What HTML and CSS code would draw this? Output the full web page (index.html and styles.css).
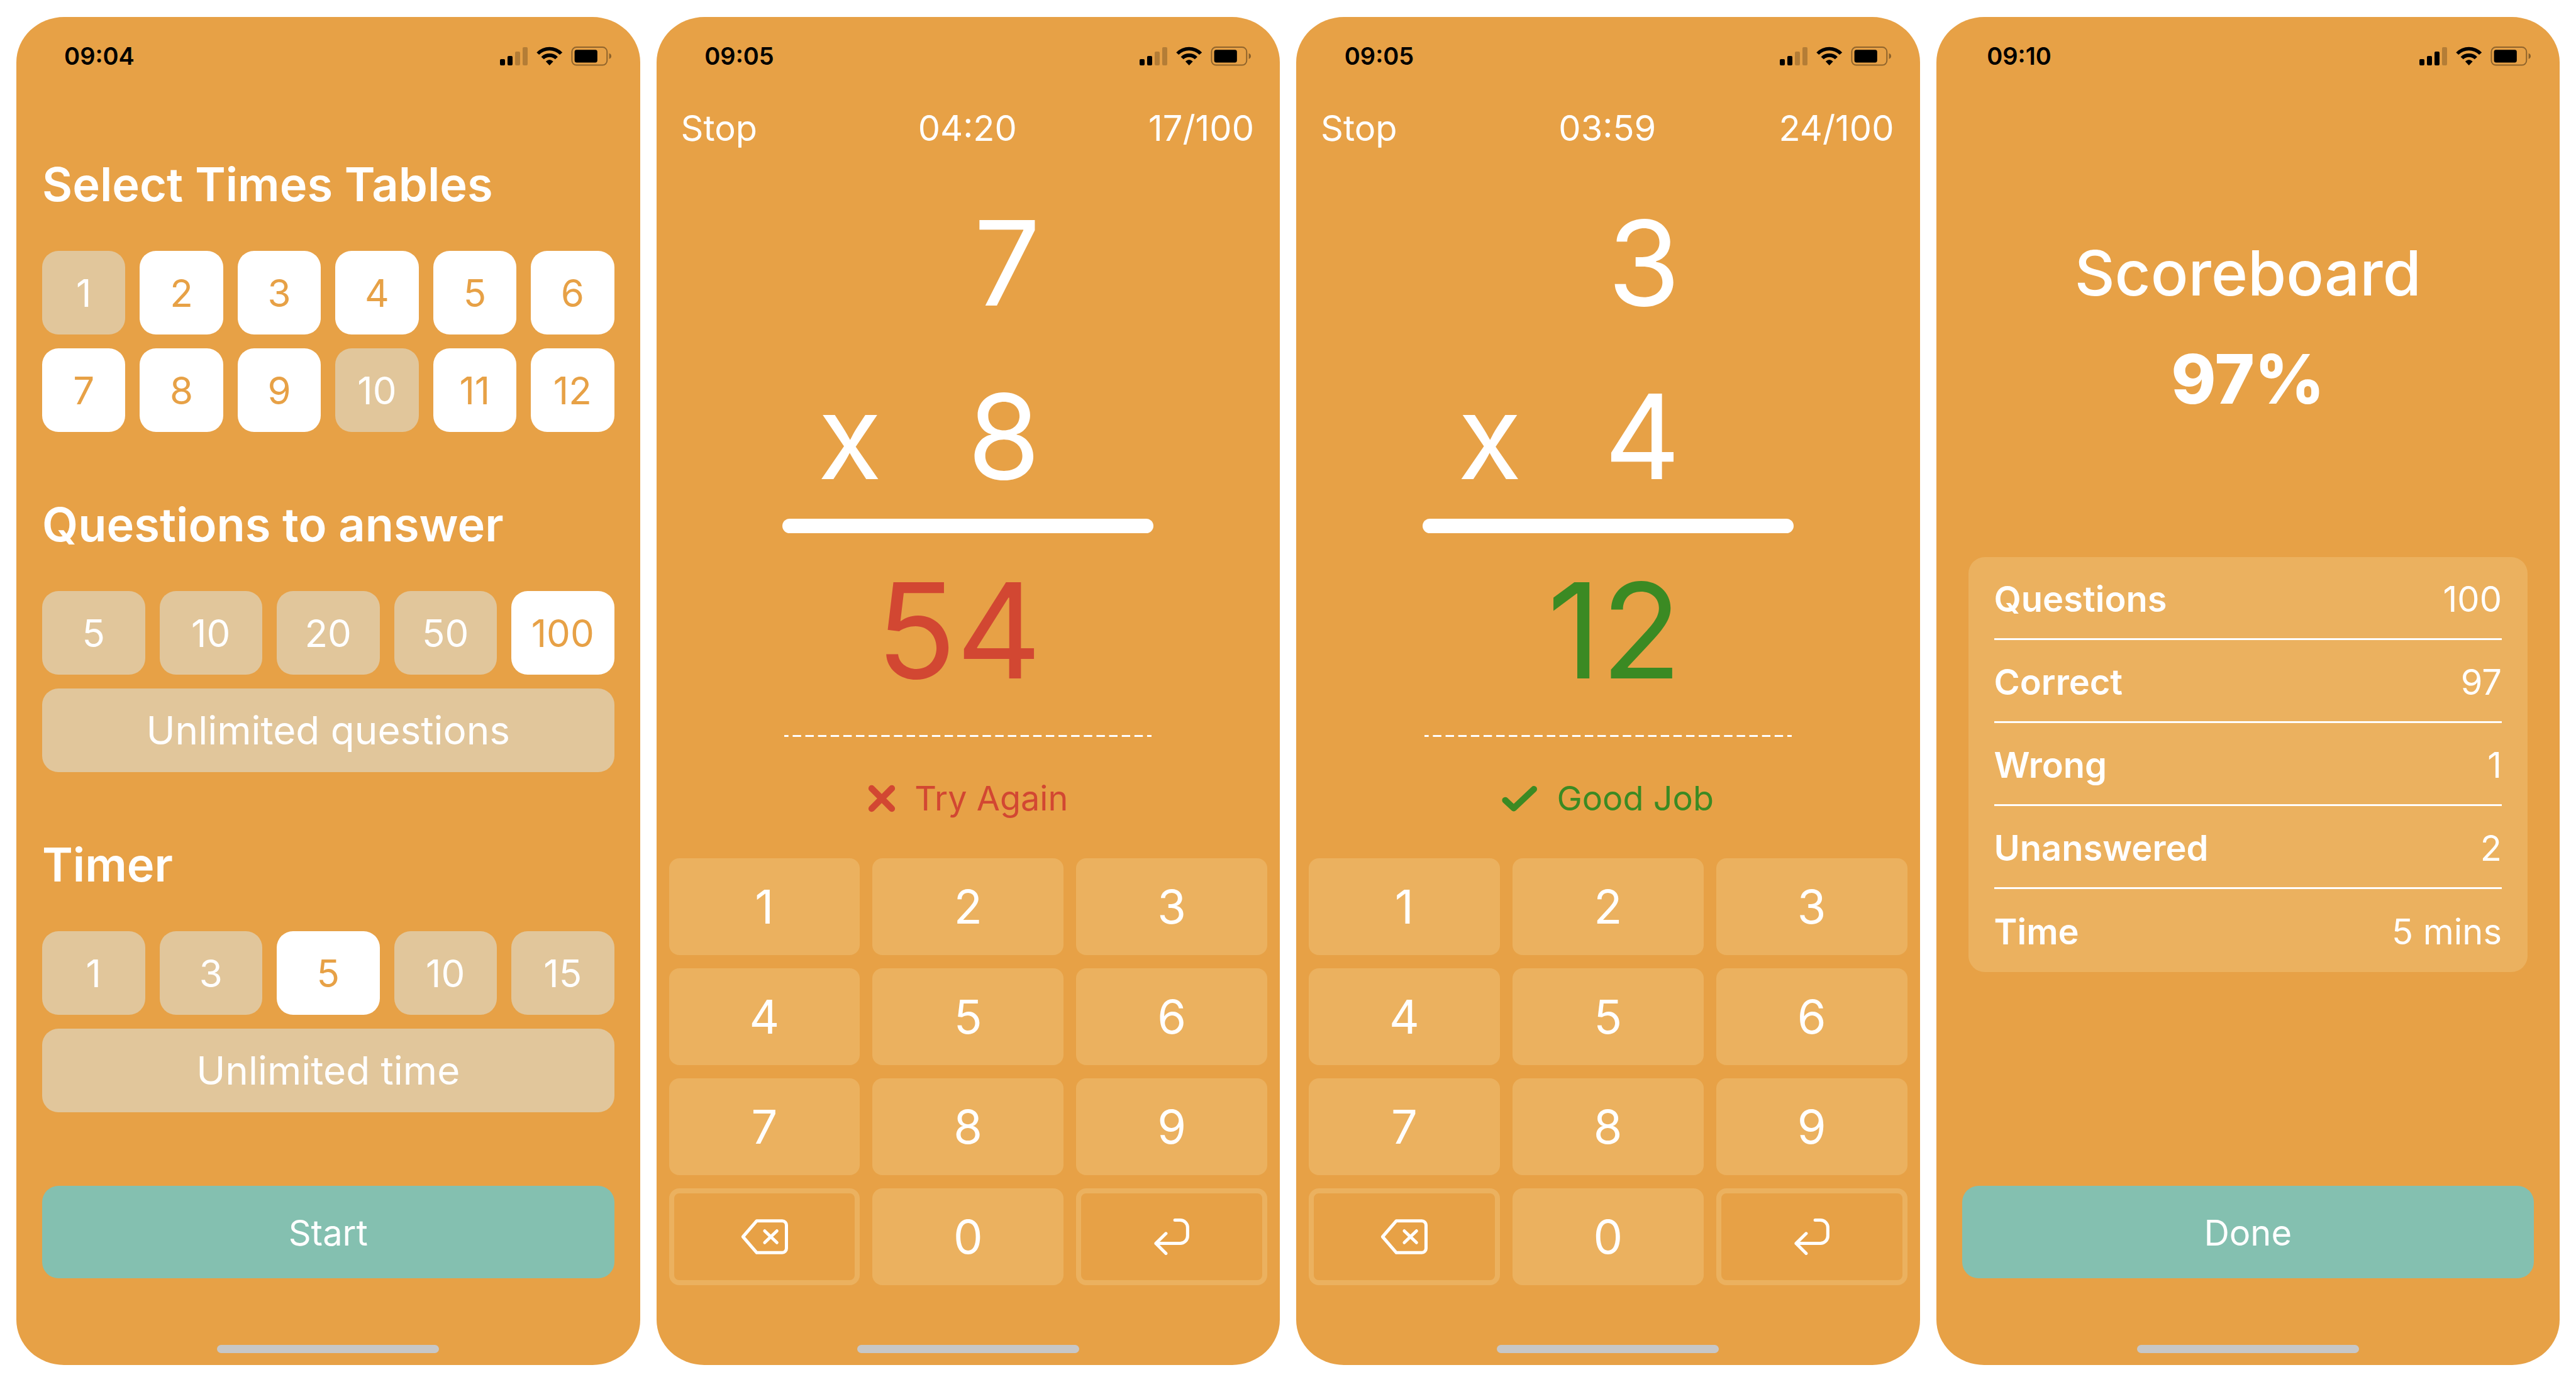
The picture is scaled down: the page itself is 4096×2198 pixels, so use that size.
FILE: index.html
```html
<!DOCTYPE html>
<html lang="en">
<head>
<meta charset="utf-8">
<title>Times Tables</title>
<link rel="stylesheet" href="styles.css">
</head>
<body>
<svg class="defs" aria-hidden="true">
  <symbol id="wifi-battery" viewBox="0 0 430 114">
    <path d="M4 37A102 102 0 0 1 150 37L135 50A82 82 0 0 0 18 50Z" fill="#000"/>
    <path d="M30 62A66 66 0 0 1 124 62L109 76A46 46 0 0 0 45 76Z" fill="#000"/>
    <path d="M56 88Q77 69 98 88L77 110Z" fill="#000"/>
    <rect x="204" y="7" width="199" height="102" rx="26" fill="none" stroke="#000" stroke-opacity=".38" stroke-width="7"/>
    <rect x="219" y="22" width="129" height="72" rx="12" fill="#000"/>
    <path d="M415 42Q427 47 427 58T415 74Z" fill="#000" fill-opacity=".4"/>
  </symbol>
  <symbol id="backspace" viewBox="0 0 89 66">
    <g fill="none" stroke="#fff" stroke-width="6" stroke-linecap="round" stroke-linejoin="round">
      <path d="M4 33L30 3H78a8 8 0 0 1 8 8V55a8 8 0 0 1-8 8H30Z"/>
      <path d="M45 22L68 44M68 22L45 44"/>
    </g>
  </symbol>
  <symbol id="enter" viewBox="107 75 199 207">
    <path d="M225 84H255A42 42 0 0 1 297 126V174A42 42 0 0 1 255 216H117M174 160L117 216L174 273" fill="none" stroke="#fff" stroke-width="18" stroke-linecap="round" stroke-linejoin="round"/>
  </symbol>
</svg>

<main class="screens">
  <section class="screen">
    <header class="status">
      <time class="clock">09:04</time>
      <span class="indicators">
        <span class="signal"><i></i><i></i><i class="off"></i><i class="off"></i></span>
        <svg class="wifi-battery"><use href="#wifi-battery"/></svg>
      </span>
    </header>
    <div class="setup">
      <h2>Select Times Tables</h2>
      <div class="options six">
        <button class="option">1</button><button class="option on">2</button><button class="option on">3</button><button class="option on">4</button><button class="option on">5</button><button class="option on">6</button>
        <button class="option on">7</button><button class="option on">8</button><button class="option on">9</button><button class="option">10</button><button class="option on">11</button><button class="option on">12</button>
      </div>
      <h2>Questions to answer</h2>
      <div class="options five">
        <button class="option">5</button><button class="option">10</button><button class="option">20</button><button class="option">50</button><button class="option on">100</button>
        <button class="option wide">Unlimited questions</button>
      </div>
      <h2>Timer</h2>
      <div class="options five">
        <button class="option">1</button><button class="option">3</button><button class="option on">5</button><button class="option">10</button><button class="option">15</button>
        <button class="option wide">Unlimited time</button>
      </div>
    </div>
    <button class="action">Start</button>
    <div class="home"></div>
  </section>

  <section class="screen">
    <header class="status">
      <time class="clock">09:05</time>
      <span class="indicators">
        <span class="signal"><i></i><i></i><i class="off"></i><i class="off"></i></span>
        <svg class="wifi-battery"><use href="#wifi-battery"/></svg>
      </span>
    </header>
    <nav class="bar">
      <button class="stop">Stop</button><span class="timer">04:20</span><span class="count">17/100</span>
    </nav>
    <div class="sum">
      <div class="row"><span>7</span></div>
      <div class="row"><span>x</span><span>8</span></div>
      <div class="rule"></div>
      <output class="answer bad">54</output>
      <div class="dashes"></div>
    </div>
    <p class="feedback bad">
      <svg class="cross" viewBox="0 0 52 52"><path d="M7 7L45 45M45 7L7 45" fill="none" stroke="currentColor" stroke-width="12" stroke-linecap="round"/></svg>
      <span>Try Again</span>
    </p>
    <div class="keypad">
      <button class="key">1</button><button class="key">2</button><button class="key">3</button>
      <button class="key">4</button><button class="key">5</button><button class="key">6</button>
      <button class="key">7</button><button class="key">8</button><button class="key">9</button>
      <button class="key outline" aria-label="Delete"><svg class="backspace"><use href="#backspace"/></svg></button>
      <button class="key">0</button>
      <button class="key outline" aria-label="Enter"><svg class="enter"><use href="#enter"/></svg></button>
    </div>
    <div class="home"></div>
  </section>

  <section class="screen">
    <header class="status">
      <time class="clock">09:05</time>
      <span class="indicators">
        <span class="signal"><i></i><i></i><i class="off"></i><i class="off"></i></span>
        <svg class="wifi-battery"><use href="#wifi-battery"/></svg>
      </span>
    </header>
    <nav class="bar">
      <button class="stop">Stop</button><span class="timer">03:59</span><span class="count">24/100</span>
    </nav>
    <div class="sum">
      <div class="row"><span>3</span></div>
      <div class="row"><span>x</span><span>4</span></div>
      <div class="rule"></div>
      <output class="answer good">12</output>
      <div class="dashes"></div>
    </div>
    <p class="feedback good">
      <svg class="check" viewBox="60 68 200 146"><path d="M78 149L126 194L240 86" fill="none" stroke="currentColor" stroke-width="36" stroke-linecap="round" stroke-linejoin="round"/></svg>
      <span>Good Job</span>
    </p>
    <div class="keypad">
      <button class="key">1</button><button class="key">2</button><button class="key">3</button>
      <button class="key">4</button><button class="key">5</button><button class="key">6</button>
      <button class="key">7</button><button class="key">8</button><button class="key">9</button>
      <button class="key outline" aria-label="Delete"><svg class="backspace"><use href="#backspace"/></svg></button>
      <button class="key">0</button>
      <button class="key outline" aria-label="Enter"><svg class="enter"><use href="#enter"/></svg></button>
    </div>
    <div class="home"></div>
  </section>

  <section class="screen">
    <header class="status">
      <time class="clock">09:10</time>
      <span class="indicators">
        <span class="signal"><i></i><i></i><i></i><i class="off"></i></span>
        <svg class="wifi-battery"><use href="#wifi-battery"/></svg>
      </span>
    </header>
    <h1>Scoreboard</h1>
    <p class="score">97%</p>
    <div class="card">
      <table>
        <tr><th scope="row">Questions</th><td>100</td></tr>
        <tr><th scope="row">Correct</th><td>97</td></tr>
        <tr><th scope="row">Wrong</th><td>1</td></tr>
        <tr><th scope="row">Unanswered</th><td>2</td></tr>
        <tr><th scope="row">Time</th><td>5 mins</td></tr>
      </table>
    </div>
    <button class="action">Done</button>
    <div class="home"></div>
  </section>
</main>
</body>
</html>
```
FILE: styles.css
```css
:root {
  --orange: #e7a146;
  --light: #ebb15f;
  --sand: #e1c69b;
  --teal: #84c0b0;
  --red: #d24732;
  --green: #3b8a23;
}

* { box-sizing: border-box; }

body {
  margin: 0;
  background: #fff;
  color: #fff;
  font-family: Inter, "Liberation Sans", sans-serif;
  font-size: 56px;
  line-height: 80px;
}

h1, h2, p { margin: 0; }

button {
  margin: 0;
  padding: 0;
  border: 0;
  background: none;
  color: inherit;
  font: inherit;
}

svg { display: block; }

.defs {
  position: absolute;
  width: 0;
  height: 0;
}

.screens {
  display: grid;
  grid-template-columns: repeat(4, 1fr);
  gap: 26px;
  min-height: 100vh;
  padding: 27px 26px;
}

.screen {
  display: flex;
  flex-direction: column;
  padding-bottom: 19px;
  border-radius: 76px / 72px;
  background: var(--orange);
}

/* Status bar */
.status {
  display: flex;
  align-items: center;
  justify-content: space-between;
  padding: 32px 45px 0 40px;
  color: #000;
}

.clock {
  width: 184px;
  font-size: 38px;
  font-weight: 600;
  line-height: 60px;
  text-align: center;
}

.indicators {
  display: flex;
  align-items: center;
  gap: 13px;
}

.signal {
  display: flex;
  align-items: flex-end;
  gap: 4px;
  height: 30px;
}

.signal i {
  width: 8px;
  height: 10px;
  border-radius: 2px;
  background: #000;
}

.signal i:nth-child(2) { height: 15px; }
.signal i:nth-child(3) { height: 22px; }
.signal i:nth-child(4) { height: 29px; }
.signal .off { opacity: .22; }

.wifi-battery {
  width: 121px;
  height: 32px;
}

/* Setup screen */
.setup {
  padding: 129px 41px 0;
}

h2 {
  margin-bottom: 61px;
  font-size: 74px;
  font-weight: 600;
  line-height: 90px;
}

.options {
  display: grid;
  gap: 22px 23px;
}

.options + h2 { margin-top: 102px; }

.six { grid-template-columns: repeat(6, 1fr); }
.five { grid-template-columns: repeat(5, 1fr); }

.option {
  height: 133px;
  border-radius: 26px;
  background: var(--sand);
  font-size: 60px;
}

.option.on {
  background: #fff;
  color: var(--orange);
}

.option.wide {
  grid-column: 1 / -1;
  font-size: 62px;
}

.action {
  height: 147px;
  margin: auto 41px 0;
  padding-top: 2px;
  border-radius: 26px;
  background: var(--teal);
}

.home {
  width: 353px;
  height: 13px;
  margin: auto auto 0;
  border-radius: 7px;
  background: #c7c7c7;
}

.action + .home { margin-top: 106px; }

/* Question screens */
.bar {
  display: grid;
  grid-template-columns: 1fr auto 1fr;
  margin-top: 45px;
  padding: 0 41px 0 39px;
}

.stop { text-align: left; }
.count { text-align: right; }

.sum {
  display: flex;
  flex-direction: column;
  width: 590px;
  margin: 54px auto 0;
}

.row {
  display: flex;
  justify-content: flex-end;
  margin-bottom: 36px;
  padding: 0 180px 0 56px;
  font-size: 187px;
  line-height: 240px;
}

.row + .row {
  justify-content: space-between;
  margin-bottom: 11px;
}

.rule {
  height: 23px;
  border-radius: 12px;
  background: #fff;
}

.answer {
  margin: 25px 0 36px;
  padding-right: 178px;
  font-size: 210px;
  line-height: 260px;
  text-align: right;
}

.bad { color: var(--red); }
.good { color: var(--green); }

.dashes {
  height: 3px;
  margin: 0 3px;
  background: linear-gradient(90deg, #fff 0 32%, transparent 32% 68%, #fff 68%) 0 0 / 20px 3px;
  background-repeat: round;
}

.feedback {
  display: flex;
  align-items: center;
  justify-content: center;
  gap: 30px;
  margin: 58px 0 55px;
  font-size: 54px;
}

.cross { width: 44px; height: 44px; }
.check { width: 57px; height: 41px; }

.keypad {
  display: grid;
  grid-template-columns: repeat(3, 1fr);
  gap: 21px 20px;
  padding: 0 20px;
}

.key {
  display: flex;
  align-items: center;
  justify-content: center;
  height: 154px;
  border-radius: 16px;
  background: var(--light);
  font-size: 74px;
}

.outline {
  border: 8px solid var(--light);
  background: none;
}

.backspace { width: 75px; height: 56px; }
.enter { width: 56px; height: 58px; }

/* Scoreboard */
h1 {
  margin-top: 255px;
  font-size: 99px;
  font-weight: 500;
  line-height: 120px;
  text-align: center;
}

.score {
  margin-top: 39px;
  font-size: 108px;
  font-weight: 800;
  line-height: 140px;
  text-align: center;
}

.card {
  margin: 213px 51px 0;
  padding: 0 41px;
  border-radius: 26px;
  background: var(--light);
}

table {
  width: 100%;
  border-collapse: separate;
  border-spacing: 0;
}

th, td {
  height: 132px;
  padding: 4px 0 0;
}

th {
  font-weight: 600;
  text-align: left;
}

td { text-align: right; }

tr:not(:last-child) > * { border-bottom: 3px solid #fff; }
```
